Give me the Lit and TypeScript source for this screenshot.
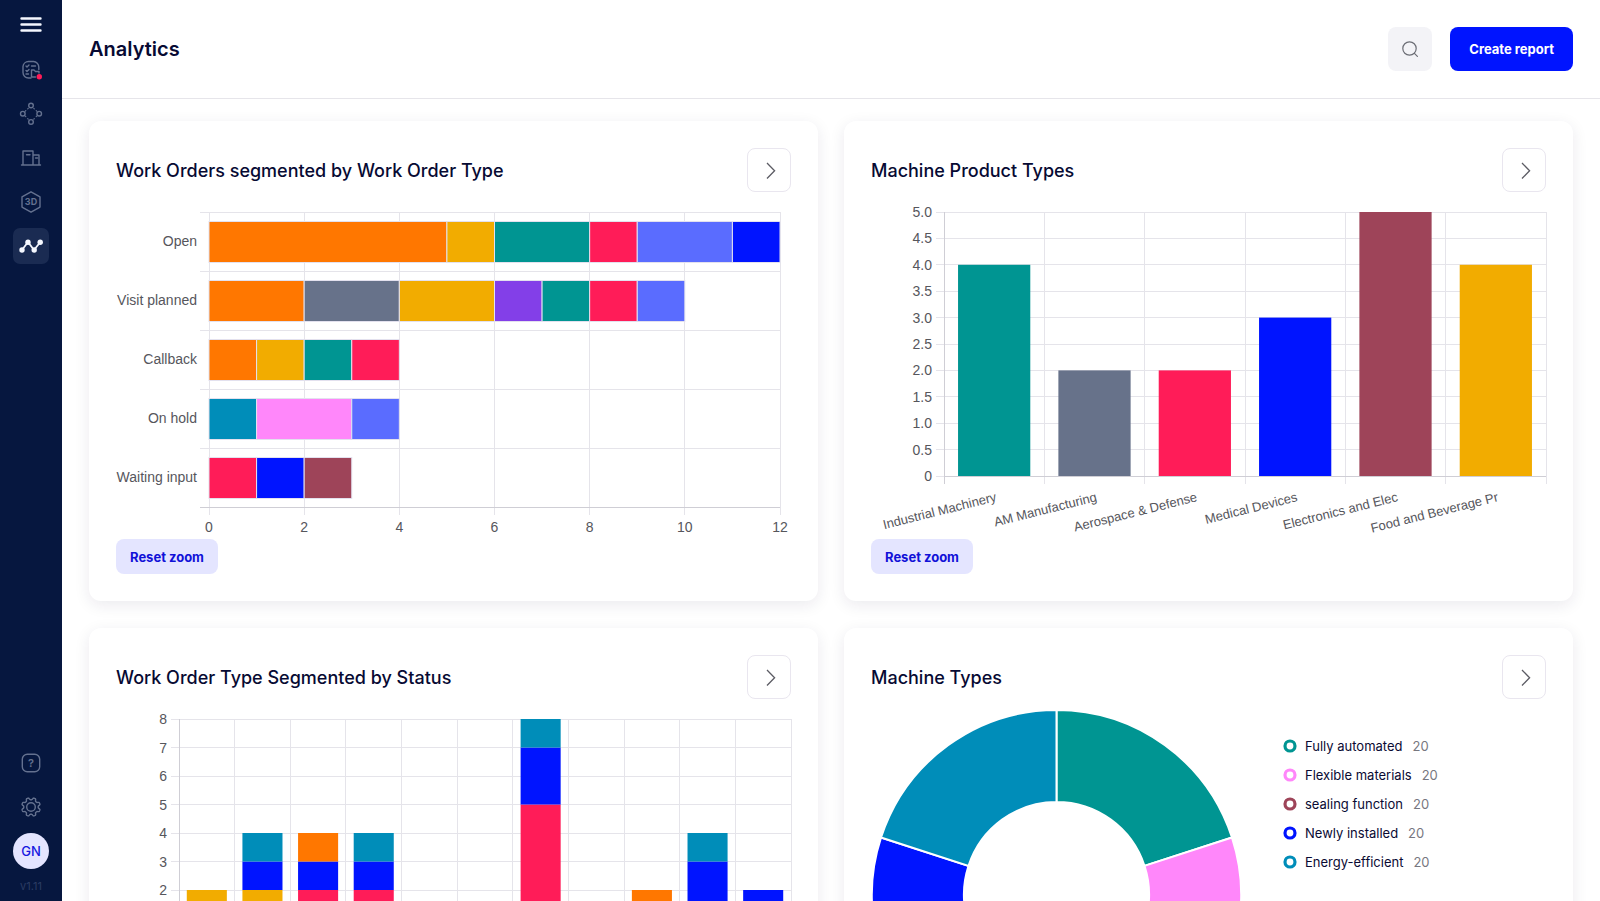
import { LitElement, html, svg, css, TemplateResult } from "lit";
import { customElement, property, state } from "lit/decorators.js";

const C = {
  orange: "#ff7700",
  yellow: "#f2ac00",
  green: "#009592",
  red: "#ff1c58",
  periwinkle: "#5a6cff",
  blue: "#0014ff",
  slate: "#67728a",
  purple: "#833fe8",
  cyan: "#008db9",
  pink: "#ff87fa",
  maroon: "#9e4459",
};

type Segment = [number, string];
interface Row {
  label: string;
  parts: Segment[];
}

const ordersByStatus: Row[] = [
  { label: "Open", parts: [[5, C.orange], [1, C.yellow], [2, C.green], [1, C.red], [2, C.periwinkle], [1, C.blue]] },
  { label: "Visit planned", parts: [[2, C.orange], [2, C.slate], [2, C.yellow], [1, C.purple], [1, C.green], [1, C.red], [1, C.periwinkle]] },
  { label: "Callback", parts: [[1, C.orange], [1, C.yellow], [1, C.green], [1, C.red]] },
  { label: "On hold", parts: [[1, C.cyan], [2, C.pink], [1, C.periwinkle]] },
  { label: "Waiting input", parts: [[1, C.red], [1, C.blue], [1, C.maroon]] },
];

const productTypes: Row[] = [
  { label: "Industrial Machinery", parts: [[4, C.green]] },
  { label: "AM Manufacturing", parts: [[2, C.slate]] },
  { label: "Aerospace & Defense", parts: [[2, C.red]] },
  { label: "Medical Devices", parts: [[3, C.blue]] },
  { label: "Electronics and Elec", parts: [[5, C.maroon]] },
  { label: "Food and Beverage Pr", parts: [[4, C.yellow]] },
];

const typesByStatus: Row[] = [
  { label: "", parts: [[2, C.yellow]] },
  { label: "", parts: [[2, C.yellow], [1, C.blue], [1, C.cyan]] },
  { label: "", parts: [[2, C.red], [1, C.blue], [1, C.orange]] },
  { label: "", parts: [[2, C.red], [1, C.blue], [1, C.cyan]] },
  { label: "", parts: [] },
  { label: "", parts: [] },
  { label: "", parts: [[5, C.red], [2, C.blue], [1, C.cyan]] },
  { label: "", parts: [] },
  { label: "", parts: [[2, C.orange]] },
  { label: "", parts: [[3, C.blue], [1, C.cyan]] },
  { label: "", parts: [[2, C.blue]] },
];

const machineTypes = [
  { label: "Fully automated", value: 20, color: C.green },
  { label: "Flexible materials", value: 20, color: C.pink },
  { label: "sealing function", value: 20, color: C.maroon },
  { label: "Newly installed", value: 20, color: C.blue },
  { label: "Energy-efficient", value: 20, color: C.cyan },
];

/** Base for charts that draw at the width of their container. */
class FluidChart extends LitElement {
  @state() protected width = 675;
  @property({ type: Number }) height = 337;
  @property({ attribute: false }) rows: Row[] = [];
  private observer?: ResizeObserver;

  static styles = css`
    :host {
      display: block;
      min-width: 0;
    }
    .plot {
      display: block;
      width: 100%;
      overflow: visible;
      font-family: "Liberation Sans", Arial, sans-serif;
      font-size: 14px;
    }
    .tick {
      fill: #56565c;
    }
    .slanted {
      font-size: 13px;
    }
    .grid {
      stroke: #e5e4ea;
      stroke-width: 1;
      shape-rendering: crispEdges;
    }
    .axis {
      stroke: #cfced5;
      stroke-width: 1;
      shape-rendering: crispEdges;
    }
    .edge {
      stroke: #e3e1ee;
      stroke-width: 1;
    }
  `;

  connectedCallback() {
    super.connectedCallback();
    this.observer = new ResizeObserver((entries) => {
      const w = Math.round(entries[0].contentRect.width);
      if (w > 0) this.width = w;
    });
    this.observer.observe(this);
  }

  disconnectedCallback() {
    this.observer?.disconnect();
    super.disconnectedCallback();
  }
}

@customElement("row-chart")
class RowChart extends FluidChart {
  @property({ type: Number }) max = 12;

  render() {
    const left = 93;
    const right = this.width - 11;
    const top = 10;
    const bottom = 305;
    const unit = (right - left) / this.max;
    const band = (bottom - top) / this.rows.length;
    const ticks = Array.from({ length: this.max / 2 + 1 }, (_, i) => i * 2);
    return html`<svg class="plot" height=${this.height} role="img" aria-label="Work orders by status and type">
      ${this.rows.map((_, i) => svg`<line class="grid" x1=${left - 9} x2=${right} y1=${top + band * i} y2=${top + band * i} />`)}
      ${ticks.map((t) => svg`
        <line class="grid" x1=${left + t * unit} x2=${left + t * unit} y1=${top} y2=${bottom + 8} />
        <text class="tick" x=${left + t * unit} y=${bottom + 25} text-anchor="middle">${t}</text>`)}
      <line class="axis" x1=${left - 9} x2=${right} y1=${bottom} y2=${bottom} />
      ${this.rows.map((row, i) => {
        let sum = 0;
        return svg`
          <text class="tick" x=${left - 12} y=${top + band * (i + 0.5) + 4} text-anchor="end">${row.label}</text>
          ${row.parts.map(([n, color]) => {
            const x = left + sum * unit;
            sum += n;
            return svg`<rect class="edge" x=${x} y=${top + band * (i + 0.5) - 20} width=${n * unit} height="41" fill=${color} />`;
          })}`;
      })}
    </svg>`;
  }
}

@customElement("column-chart")
class ColumnChart extends FluidChart {
  @property({ type: Number }) max = 5;
  @property({ type: Number }) step = 0.5;
  @property({ type: Number }) digits = 0;
  @property({ type: Number }) left = 73;
  @property({ type: Number }) bottom = 274;

  render() {
    const { left, bottom } = this;
    const right = this.width;
    const top = 10;
    const unit = (bottom - top) / this.max;
    const band = (right - left) / this.rows.length;
    const ticks = Array.from({ length: this.max / this.step + 1 }, (_, i) => i * this.step);
    return html`<svg class="plot" height=${this.height} role="img" aria-label="Column chart">
      ${ticks.map((t) => svg`
        <line class="grid" x1=${left - 8} x2=${right} y1=${bottom - t * unit} y2=${bottom - t * unit} />
        <text class="tick" x=${left - 12} y=${bottom - t * unit + 5} text-anchor="end">${t === 0 ? "0" : t.toFixed(this.digits)}</text>`)}
      ${this.rows.map((_, i) => svg`<line class="grid" x1=${left + band * (i + 1)} x2=${left + band * (i + 1)} y1=${top} y2=${bottom + 8} />`)}
      <line class="axis" x1=${left} x2=${left} y1=${top} y2=${bottom + 8} />
      ${this.rows.map((row, i) => {
        let sum = 0;
        const w = band * 0.72;
        const mid = left + band * (i + 0.5);
        return svg`
          ${row.parts.map(([n, color]) => {
            sum += n;
            return svg`<rect x=${mid - w / 2} y=${bottom - sum * unit} width=${w} height=${n * unit} fill=${color} />`;
          })}
          ${row.label
            ? svg`<text class="tick slanted" text-anchor="end" transform="translate(${mid + 3} ${bottom + 25}) rotate(-14)">${row.label}</text>`
            : ""}`;
      })}
      <line class="axis" x1=${left} x2=${right} y1=${bottom} y2=${bottom} />
    </svg>`;
  }
}

@customElement("donut-chart")
class DonutChart extends LitElement {
  static styles = css`
    :host {
      display: flex;
      align-items: flex-start;
      gap: 41px;
    }
    .ring {
      flex: none;
      width: 371px;
      height: 371px;
    }
    .slice {
      stroke: #fff;
      stroke-width: 2;
    }
    .legend {
      list-style: none;
      margin: 0;
      padding: 25px 0 0;
      display: grid;
      gap: 5px;
    }
    .entry {
      display: flex;
      align-items: center;
      height: 24px;
      font-size: 13px;
      color: #0a0a33;
      white-space: nowrap;
    }
    .dot {
      width: 14px;
      height: 14px;
      margin-right: 8px;
    }
    .count {
      margin-left: 10px;
      color: #77777f;
    }
  `;

  render() {
    const c = 185.5;
    const outer = 184.5;
    const inner = 92.5;
    const total = machineTypes.reduce((s, m) => s + m.value, 0);
    const pt = (r: number, a: number) => `${(c + r * Math.sin(a)).toFixed(2)} ${(c - r * Math.cos(a)).toFixed(2)}`;
    let from = 0;
    return html`
      <svg class="ring" viewBox="0 0 371 371" role="img" aria-label="Machine types">
        ${machineTypes.map((m) => {
          const to = from + (m.value / total) * Math.PI * 2;
          const d = `M${pt(outer, from)}A${outer} ${outer} 0 0 1 ${pt(outer, to)}L${pt(inner, to)}A${inner} ${inner} 0 0 0 ${pt(inner, from)}Z`;
          from = to;
          return svg`<path class="slice" d=${d} fill=${m.color} />`;
        })}
      </svg>
      <ul class="legend">
        ${machineTypes.map((m) => html`<li class="entry">
          <svg class="dot" viewBox="0 0 14 14" aria-hidden="true"><circle cx="7" cy="7" r="5" fill="none" stroke=${m.color} stroke-width="3.2" /></svg>
          <span>${m.label}</span><span class="count">${m.value}</span>
        </li>`)}
      </ul>`;
  }
}

@customElement("chart-card")
class ChartCard extends LitElement {
  @property() heading = "";

  static styles = css`
    :host {
      display: block;
      min-width: 0;
      padding: 27px;
      background: #fff;
      border-radius: 12px;
      box-shadow: 0 4px 16px rgba(30, 20, 70, 0.09);
    }
    .head {
      display: flex;
      align-items: center;
      justify-content: space-between;
      margin-bottom: 10px;
    }
    .title {
      margin: 0;
      padding-top: 2px;
      font-size: 18px;
      line-height: 24px;
      font-weight: 500;
      color: #070a33;
    }
    .open {
      display: grid;
      place-items: center;
      width: 44px;
      height: 44px;
      padding: 0;
      border: 1px solid #e9e6ef;
      border-radius: 8px;
      background: #fff;
    }
    .chevron {
      width: 20px;
      height: 20px;
      fill: none;
      stroke: #5c5c64;
      stroke-width: 1.3;
    }
  `;

  render() {
    return html`
      <div class="head">
        <h2 class="title">${this.heading}</h2>
        <button class="open" aria-label="Open ${this.heading}">
          <svg class="chevron" viewBox="0 0 20 20"><path d="M8 3l7.600 7.700L8 18.500" /></svg>
        </button>
      </div>
      <slot></slot>`;
  }
}

const gearPath = (() => {
  const pts: string[] = [];
  for (let i = 0; i < 128; i++) {
    const a = (i / 128) * Math.PI * 2;
    const wave = Math.max(-0.7, Math.min(0.7, -Math.cos(8 * a) * 1.3));
    const r = 8.3 + wave * 1.5;
    pts.push(`${(12 + r * Math.sin(a)).toFixed(2)} ${(12 - r * Math.cos(a)).toFixed(2)}`);
  }
  return `M${pts.join("L")}Z`;
})();

const icons: Record<string, TemplateResult> = {
  orders: svg`<path d="M12 20H9.500a5.500 5.500 0 0 1-5.500-5.500v-6A5.500 5.500 0 0 1 9.500 3.500h5A5.500 5.500 0 0 1 19.800 9v2.500" />
    <path d="M7 8l1 1 2-2M7 12.500l1 1 2-2M12.500 8h4M7 16h2.500" />
    <path d="M20 15v-1.500h-3.500l-1.500-1.500h-2.500v7h4" />
    <circle cx="20.300" cy="18.800" r="2.700" fill="#ff1c58" stroke="none" />`,
  nodes: svg`<circle cx="12" cy="3.500" r="2.300" /><circle cx="20.200" cy="11.700" r="2.300" /><circle cx="12" cy="19.900" r="2.300" /><circle cx="3.800" cy="11.700" r="2.300" />
    <path stroke-width="1.200" d="M14.800 6.300l.5.500M17.200 8.700l.5.500M17.700 14.200l-.5.500M15.300 16.600l-.5.500M9.200 17.100l-.5-.5M6.800 14.700l-.5-.5M6.300 9.200l.5-.5M8.700 6.800l.5-.5" />`,
  buildings: svg`<path d="M2.500 19h19M4 19V5h10v14M14 9h6v10M7.500 8.800h3.500M16.500 12h2" />`,
  model: svg`<path d="M12 1.800l9 5.100v10.200l-9 5.100-9-5.100V6.900z" /><text class="glyph" x="12" y="15.300" text-anchor="middle">3D</text>`,
  analytics: svg`<path stroke-width="1.800" d="M3 16l6-8 6 8 6-7.500" /><g fill="currentColor" stroke="none"><circle cx="3" cy="16" r="2.700" /><circle cx="9" cy="8.300" r="2.700" /><circle cx="15.200" cy="16" r="2.700" /><circle cx="21.200" cy="8.300" r="2.700" /></g>`,
  help: svg`<rect x="3.300" y="3.300" width="17.400" height="17.400" rx="5" /><text class="glyph mark" x="12" y="16" text-anchor="middle">?</text>`,
  settings: svg`<path d=${gearPath} /><circle cx="12" cy="12" r="4.300" />`,
};

@customElement("side-bar")
class SideBar extends LitElement {
  static styles = css`
    :host {
      display: flex;
      flex-direction: column;
      align-items: center;
      width: 62px;
      flex: none;
      box-sizing: border-box;
      padding: 7px 0 6px;
      background: #06173f;
    }
    .menu,
    .item,
    .avatar {
      display: grid;
      place-items: center;
      width: 36px;
      height: 36px;
      padding: 0;
      border: 0;
      background: none;
      color: #64718f;
      text-decoration: none;
    }
    .menu {
      color: #f5f8ff;
      margin-bottom: 9px;
    }
    .group {
      display: flex;
      flex-direction: column;
      align-items: center;
      gap: 8px;
    }
    .bottom {
      margin-top: auto;
    }
    .active {
      background: #1a2b52;
      border-radius: 7px;
      color: #f5f8ff;
    }
    .icon {
      width: 24px;
      height: 24px;
      fill: none;
      stroke: currentColor;
      stroke-width: 1.4;
      stroke-linejoin: round;
      stroke-linecap: round;
      overflow: visible;
    }
    .glyph {
      fill: currentColor;
      stroke: none;
      font-size: 9px;
      font-weight: 700;
    }
    .mark {
      font-size: 11px;
      font-weight: 600;
    }
    .avatar {
      border-radius: 50%;
      background: #e4e5ff;
      color: #1717e0;
      font-family: inherit;
      font-size: 13px;
      font-weight: 500;
    }
    .version {
      font-size: 11px;
      line-height: 18px;
      color: #2b3c63;
    }
  `;

  private link(name: string, label: string, active = false) {
    return html`<a class="item ${active ? "active" : ""}" href="#${name}" aria-label=${label}>
      <svg class="icon" viewBox="0 0 24 24" aria-hidden="true">${icons[name]}</svg>
    </a>`;
  }

  render() {
    return html`
      <button class="menu" aria-label="Menu">
        <svg class="icon" viewBox="0 0 24 24" aria-hidden="true"><path stroke-width="2.400" d="M2.500 5.500h19M2.500 11.500h19M2.500 17.500h19" /></svg>
      </button>
      <nav class="group">
        ${this.link("orders", "Work orders")} ${this.link("nodes", "Network")} ${this.link("buildings", "Facilities")}
        ${this.link("model", "3D models")} ${this.link("analytics", "Analytics", true)}
      </nav>
      <div class="group bottom">
        ${this.link("help", "Help")} ${this.link("settings", "Settings")}
        <button class="avatar" aria-label="Account GN">GN</button>
        <span class="version">v1.11</span>
      </div>`;
  }
}

@customElement("app-root")
class AppRoot extends LitElement {
  static styles = css`
    :host {
      display: flex;
      height: 100vh;
      overflow: hidden;
      background: #fff;
      font-family: Inter, "Open Sans", sans-serif;
      color: #070a33;
    }
    .page {
      flex: 1;
      min-width: 0;
      display: flex;
      flex-direction: column;
    }
    .header {
      display: flex;
      align-items: center;
      gap: 18px;
      padding: 27px;
      border-bottom: 1px solid #e6e5ea;
    }
    .title {
      flex: 1;
      margin: 0;
      font-size: 20px;
      line-height: 28px;
      font-weight: 600;
    }
    .search {
      display: grid;
      place-items: center;
      width: 44px;
      height: 44px;
      padding: 0;
      border: 0;
      border-radius: 8px;
      background: #f3f3f7;
    }
    .lens {
      width: 18px;
      height: 18px;
      fill: none;
      stroke: #6b6d75;
      stroke-width: 1.2;
      stroke-linecap: round;
    }
    .create,
    .reset {
      border: 0;
      border-radius: 8px;
      font-family: inherit;
      font-size: 13px;
      font-weight: 700;
    }
    .create {
      height: 44px;
      padding: 0 19px;
      background: #0014ff;
      color: #fff;
    }
    .reset {
      height: 35px;
      padding: 0 14px;
      background: #e4e5ff;
      color: #1111d8;
    }
    .board {
      flex: 1;
      min-height: 0;
      overflow-y: auto;
      scrollbar-width: none;
      display: grid;
      grid-template-columns: repeat(2, minmax(0, 1fr));
      align-content: start;
      gap: 27px 26px;
      padding: 22px 27px 26px;
    }
  `;

  render() {
    return html`
      <side-bar></side-bar>
      <div class="page">
        <header class="header">
          <h1 class="title">Analytics</h1>
          <button class="search" aria-label="Search">
            <svg class="lens" viewBox="0 0 18 18"><circle cx="8.500" cy="8.500" r="6.700" /><path d="M13.400 13.400l3 3" /></svg>
          </button>
          <button class="create">Create report</button>
        </header>
        <main class="board">
          <chart-card heading="Work Orders segmented by Work Order Type">
            <row-chart .rows=${ordersByStatus}></row-chart>
            <button class="reset">Reset zoom</button>
          </chart-card>
          <chart-card heading="Machine Product Types">
            <column-chart .rows=${productTypes} digits="1"></column-chart>
            <button class="reset">Reset zoom</button>
          </chart-card>
          <chart-card heading="Work Order Type Segmented by Status">
            <column-chart .rows=${typesByStatus} max="8" step="1" left="63" bottom="238"></column-chart>
            <button class="reset">Reset zoom</button>
          </chart-card>
          <chart-card heading="Machine Types">
            <donut-chart></donut-chart>
          </chart-card>
        </main>
      </div>`;
  }
}
